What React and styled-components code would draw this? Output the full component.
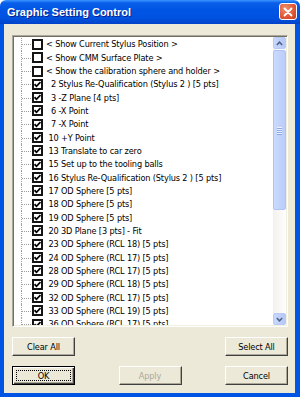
import React from 'react';
import styled, { createGlobalStyle } from 'styled-components';

const GlobalStyle = createGlobalStyle`
  html, body {
    margin: 0;
    padding: 0;
    background: #ffffff;
  }
  * {
    box-sizing: border-box;
  }
`

const items = [
  { checked: false, label: '< Show Current Stylus Position >' },
  { checked: false, label: '< Show CMM Surface Plate >' },
  { checked: false, label: '< Show the calibration sphere and holder >' },
  { checked: true, label: '  2 Stylus Re-Qualification (Stylus 2 ) [5 pts]' },
  { checked: true, label: '  3 -Z Plane [4 pts]' },
  { checked: true, label: '  6 -X Point' },
  { checked: true, label: '  7 -X Point' },
  { checked: true, label: ' 10 +Y Point' },
  { checked: true, label: ' 13 Translate to car zero' },
  { checked: true, label: ' 15 Set up to the tooling balls' },
  { checked: true, label: ' 16 Stylus Re-Qualification (Stylus 2 ) [5 pts]' },
  { checked: true, label: ' 17 OD Sphere [5 pts]' },
  { checked: true, label: ' 18 OD Sphere [5 pts]' },
  { checked: true, label: ' 19 OD Sphere [5 pts]' },
  { checked: true, label: ' 20 3D Plane [3 pts] - Fit' },
  { checked: true, label: ' 23 OD Sphere (RCL 18) [5 pts]' },
  { checked: true, label: ' 24 OD Sphere (RCL 17) [5 pts]' },
  { checked: true, label: ' 28 OD Sphere (RCL 17) [5 pts]' },
  { checked: true, label: ' 29 OD Sphere (RCL 18) [5 pts]' },
  { checked: true, label: ' 32 OD Sphere (RCL 17) [5 pts]' },
  { checked: true, label: ' 33 OD Sphere (RCL 19) [5 pts]' },
  { checked: true, label: ' 36 OD Sphere (RCL 17) [5 pts]' },
]

const Window = styled.div`
  width: 300px;
  height: 397px;
  display: flex;
  flex-direction: column;
  font-family: "DejaVu Sans", Tahoma, sans-serif;
`
const TitleBar = styled.div`
  height: 24px;
  flex: none;
  display: flex;
  align-items: center;
  justify-content: space-between;
  padding: 0 3px 1px 7px;
  border-radius: 6px 6px 0 0;
  background: linear-gradient(to bottom, #3d95ff 0%, #0a5fe9 12%, #0055e5 40%, #0052e0 75%, #0042c8 100%);
`
const Title = styled.span`
  color: #ffffff;
  font-family: "Liberation Sans", Arial, sans-serif;
  font-weight: bold;
  font-size: 11px;
  text-shadow: 1px 1px 0 #0a1e8a;
`
const CloseButton = styled.div`
  width: 18px;
  height: 17px;
  border: 1px solid #ffffff;
  border-radius: 3px;
  background: radial-gradient(circle at 35% 30%, #f0906c 0%, #e0593a 55%, #c63c1c 100%);
  display: flex;
  align-items: center;
  justify-content: center;
`
const Body = styled.div`
  flex: 1;
  display: flex;
  flex-direction: column;
  background: #ece9d8;
  border-style: solid;
  border-color: #0054e3;
  border-width: 0 5px 4px 4px;
  padding: 11px 7px 8px 8px;
`
const ListBox = styled.div`
  height: 292px;
  flex: none;
  display: flex;
  background: #ffffff;
  border: 1px solid;
  border-color: #aca899 #ffffff #ffffff #aca899;
  box-shadow: inset 1px 1px 0 #716f64, inset -1px -1px 0 #f1efe2;
  padding: 1px;
  overflow: hidden;
`
const Rows = styled.div`
  flex: 1;
  overflow: hidden;
  padding-top: 0.7px;
`
const Row = styled.div`
  height: 13.333px;
  display: flex;
  align-items: center;
  padding-left: 7px;
`
const Tree = styled.span`
  position: relative;
  width: 10px;
  height: 100%;
  flex: none;
  border-left: 1px dotted #a0a0a0;

  &::after {
    content: '';
    position: absolute;
    left: 0;
    right: 0;
    top: 50%;
    border-top: 1px dotted #a0a0a0;
  }
`
const Box = styled.span`
  width: 11px;
  height: 11px;
  flex: none;
  margin-left: 1px;
  border: 2px solid #141414;
  background: #ffffff;
  display: flex;
  align-items: center;
  justify-content: center;
`
const Label = styled.span`
  margin-left: 3px;
  font-size: 8.2px;
  letter-spacing: -0.15px;
  color: #000000;
  white-space: pre;
`
const ScrollBar = styled.div`
  width: 13px;
  flex: none;
  display: flex;
  flex-direction: column;
  background: linear-gradient(to right, #f3f1ec, #fefefe);
`
const Arrow = styled.div`
  height: 12px;
  flex: none;
  margin: ${p => (p.down ? 'auto 0 0' : '0')};
  border: 1px solid #b8cbf6;
  border-radius: 2px;
  background: linear-gradient(to right, #c9d8fc, #b4c8f6);
  display: flex;
  align-items: center;
  justify-content: center;
`
const Thumb = styled.div`
  height: 160px;
  margin-top: 1px;
  border: 1px solid #b0c4f4;
  border-radius: 2px;
  background: linear-gradient(to right, #cbdafd, #b9cdf8);
  display: flex;
  flex-direction: column;
  align-items: center;
  justify-content: center;
  gap: 1px;
`
const Grip = styled.span`
  width: 5px;
  height: 1px;
  background: #eef3ff;
  box-shadow: 0 1px 0 #8ca6e0;
`
const ButtonRow = styled.div`
  display: flex;
  justify-content: space-between;
  margin-top: 10px;
`
const Button = styled.button`
  width: 63px;
  height: 19px;
  padding: 0;
  font-family: "DejaVu Sans", Tahoma, sans-serif;
  font-size: 8.2px;
  letter-spacing: -0.15px;
  color: ${p => (p.disabled ? '#aca899' : '#000000')};
  background: #ece9d8;
  border: 1px solid;
  border-color: ${p => (p.primary ? '#000000' : '#ffffff #404040 #404040 #ffffff')};
  box-shadow: ${p => (p.primary
    ? 'inset 1px 1px 0 #ffffff, inset -1px -1px 0 #404040, inset -2px -2px 0 #aca899'
    : 'inset -1px -1px 0 #aca899')};
  outline: ${p => (p.primary ? '1px dotted #000000' : 'none')};
  outline-offset: -5px;
`

function Check() {
  return (
    <svg width="7" height="7" viewBox="0 0 7 7">
      <polyline points="0.5,3.2 2.5,5.3 6.5,1" fill="none" stroke="#000" strokeWidth="1.8" />
    </svg>
  )
}

export default function App() {
  return (
    <Window>
      <GlobalStyle />
      <TitleBar>
        <Title>Graphic Setting Control</Title>
        <CloseButton>
          <svg width="10" height="10" viewBox="0 0 10 10">
            <path d="M1.5 1.5 L8.5 8.5 M8.5 1.5 L1.5 8.5" stroke="#fff" strokeWidth="1.8" strokeLinecap="round" />
          </svg>
        </CloseButton>
      </TitleBar>
      <Body>
        <ListBox>
          <Rows>
            {items.map((item, i) => (
              <Row key={i}>
                <Tree />
                <Box>{item.checked && <Check />}</Box>
                <Label>{item.label}</Label>
              </Row>
            ))}
          </Rows>
          <ScrollBar>
            <Arrow>
              <svg width="7" height="5" viewBox="0 0 7 5">
                <polyline points="0.8,4 3.5,1.2 6.2,4" fill="none" stroke="#4d6185" strokeWidth="1.5" />
              </svg>
            </Arrow>
            <Thumb>
              <Grip />
              <Grip />
              <Grip />
              <Grip />
            </Thumb>
            <Arrow down>
              <svg width="7" height="5" viewBox="0 0 7 5">
                <polyline points="0.8,1 3.5,3.8 6.2,1" fill="none" stroke="#4d6185" strokeWidth="1.5" />
              </svg>
            </Arrow>
          </ScrollBar>
        </ListBox>
        <ButtonRow>
          <Button>Clear All</Button>
          <Button>Select All</Button>
        </ButtonRow>
        <ButtonRow>
          <Button primary>OK</Button>
          <Button disabled>Apply</Button>
          <Button>Cancel</Button>
        </ButtonRow>
      </Body>
    </Window>
  )
}
